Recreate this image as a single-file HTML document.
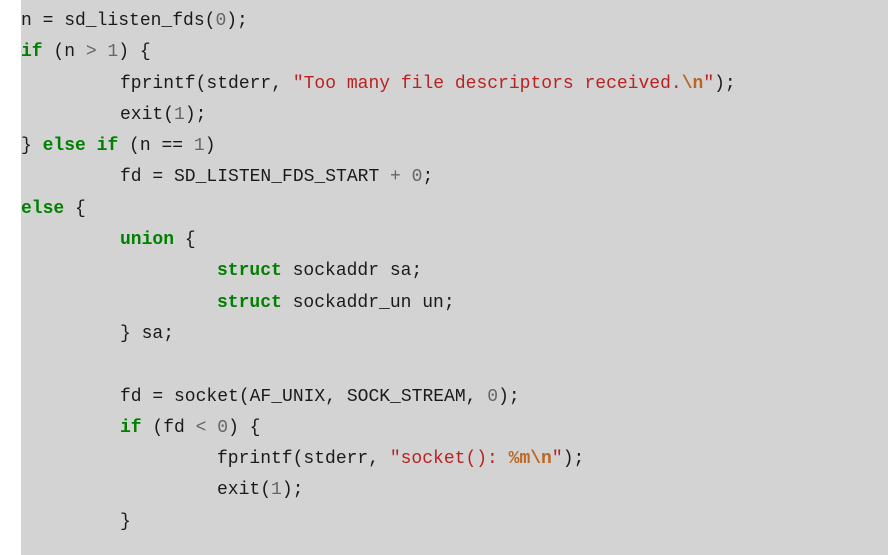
<!DOCTYPE html>
<html><head><meta charset="utf-8"><style>
html,body{margin:0;padding:0;background:#fff;width:888px;height:555px;overflow:hidden}
#c{position:absolute;left:21px;top:0;width:867px;height:555px;background:#d3d3d3;
font-family:"Liberation Mono",monospace;font-size:18px;color:#1a1a1a;padding-top:6px;box-sizing:border-box}
.l{height:31.3px;line-height:31.3px;white-space:pre}
.i1{padding-left:99px}.i2{padding-left:196px}
.k{color:#008000;font-weight:bold}
.s{color:#ba2121}
.e{color:#bb6622;font-weight:bold}
.n{color:#666}
</style></head><body><div id="c">
<div class="l">n = sd_listen_fds(<span class="n">0</span>);</div>
<div class="l"><span class="k">if</span> (n <span class="n">&gt;</span> <span class="n">1</span>) {</div>
<div class="l i1">fprintf(stderr, <span class="s">"Too many file descriptors received.</span><span class="e">\n</span><span class="s">"</span>);</div>
<div class="l i1">exit(<span class="n">1</span>);</div>
<div class="l">} <span class="k">else</span> <span class="k">if</span> (n == <span class="n">1</span>)</div>
<div class="l i1">fd = SD_LISTEN_FDS_START <span class="n">+</span> <span class="n">0</span>;</div>
<div class="l"><span class="k">else</span> {</div>
<div class="l i1"><span class="k">union</span> {</div>
<div class="l i2"><span class="k">struct</span> sockaddr sa;</div>
<div class="l i2"><span class="k">struct</span> sockaddr_un un;</div>
<div class="l i1">} sa;</div>
<div class="l"> </div>
<div class="l i1">fd = socket(AF_UNIX, SOCK_STREAM, <span class="n">0</span>);</div>
<div class="l i1"><span class="k">if</span> (fd <span class="n">&lt;</span> <span class="n">0</span>) {</div>
<div class="l i2">fprintf(stderr, <span class="s">"socket(): </span><span class="e">%m\n</span><span class="s">"</span>);</div>
<div class="l i2">exit(<span class="n">1</span>);</div>
<div class="l i1">}</div>
</div></body></html>
